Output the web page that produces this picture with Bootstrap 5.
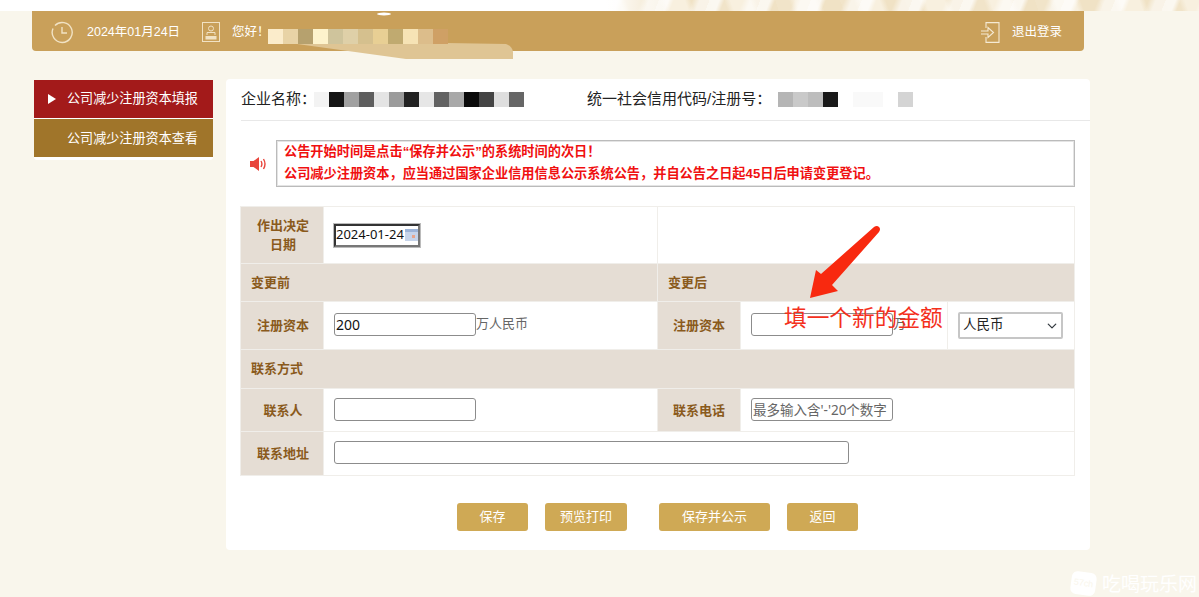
<!DOCTYPE html>
<html lang="zh-CN">

<head>
    <meta charset="UTF-8">
    <meta name="viewport" content="width=device-width, initial-scale=1.0">
    <title>公司减少注册资本填报</title>
    <link href="https://cdn.jsdelivr.net/npm/bootstrap@5.3.0/dist/css/bootstrap.min.css" rel="stylesheet">
    <style>
        body {
            background: #f9f6ec;
            font-family: "Liberation Sans", "Noto Sans CJK SC", sans-serif;
            font-size: 13px;
            color: #222;
            height: 597px;
            overflow: hidden;
            position: relative;
        }

        .top-strip {
            height: 11px;
            background:
                linear-gradient(90deg, #fff 0, #fff 605px, rgba(255, 255, 255, 0) 670px, rgba(255, 255, 255, 0) 100%),
                repeating-linear-gradient(112deg, rgba(255, 255, 255, .75) 0 9px, rgba(255, 255, 255, 0) 14px 31px, rgba(255, 255, 255, .6) 38px 47px),
                repeating-linear-gradient(70deg, #f1e4c9 0 13px, #f8f0df 19px 37px, #f0e2c5 43px 61px);
        }

        .head-bar {
            margin-left: 32px;
            width: 1052px;
            height: 40px;
            padding-top: 2px;
            background: #c9a05a;
            border-radius: 0 0 4px 4px;
            color: #fff;
            position: relative;
        }

        .head-clock {
            margin-left: 18px;
        }

        .head-date {
            width: 92px;
            margin-left: 13px;
            white-space: nowrap;
            font-size: 12.5px;
        }

        .head-card {
            margin-left: 23px;
        }

        .head-hello {
            margin-left: 12px;
            font-size: 12.5px;
        }

        .head-right {
            padding-right: 22px;
        }

        .head-logout {
            margin-left: 12px;
            font-size: 12.5px;
        }

        .head-cover {
            position: absolute;
            left: 224px;
            top: 0;
            overflow: visible;
        }

        .body-wrap {
            margin-top: 28px;
            padding-left: 34px;
        }

        .side-menu {
            width: 179px;
            height: 80px;
            margin-top: 1px;
            background: #fff;
            border-radius: 0 0 3px 3px;
        }

        .side-item {
            height: 38px;
            margin-bottom: 1px;
            padding-left: 33px;
            color: #fff;
            font-size: 13.1px;
            line-height: 38px;
            position: relative;
        }

        .side-on {
            background: #a31a1a;
        }

        .side-off {
            background: #a0752a;
            line-height: 39px;
        }

        .side-on::before {
            content: "";
            position: absolute;
            left: 14px;
            top: 14px;
            border-left: 8px solid #fff;
            border-top: 5px solid transparent;
            border-bottom: 5px solid transparent;
        }

        .main-panel {
            width: 864px;
            height: 471px;
            margin-left: 13px;
            background: #fff;
            border-radius: 4px;
            position: relative;
        }

        .firm-row {
            height: 42px;
            margin-left: 15px;
            border-bottom: 1px solid #e8e8e8;
            font-size: 15px;
            white-space: nowrap;
        }

        .firm-label-a {
            width: 73px;
        }

        .firm-label-b {
            width: 191px;
            margin-left: 63px;
        }

        .notice-row {
            margin: 19px 15px 19px 24px;
        }

        .notice-box {
            width: 799px;
            height: 47px;
            margin-left: 9px;
            padding: 0 7px;
            border: 1px solid #bbb;
            box-shadow: inset 0 0 0 1px #e4e4e4;
            color: #f01010;
            font-weight: 700;
            font-size: 13.2px;
            line-height: 22px;
            white-space: nowrap;
        }

        .form-grid {
            width: 834px;
            margin-left: 14px;
            table-layout: fixed;
            border-collapse: collapse;
        }

        .col-label {
            width: 83px;
        }

        .col-left {
            width: 334px;
        }

        .col-money {
            width: 207px;
        }

        .col-kind {
            width: 127px;
        }

        .row-date {
            height: 57px;
        }

        .row-band {
            height: 38px;
        }

        .row-band-tall {
            height: 39px;
        }

        .row-money {
            height: 48px;
        }

        .row-contact {
            height: 43px;
        }

        .row-address {
            height: 44px;
        }

        .form-grid td {
            border: 1px solid #f0eeea;
            padding: 0 0 0 10px;
            vertical-align: middle;
        }

        .form-grid td.cell-label {
            padding: 0 10px;
            background: #e5ddd4;
            color: #8a5a1c;
            font-weight: 700;
            text-align: center;
            line-height: 19px;
        }

        .form-grid td.cell-label:first-child {
            padding: 0 9px 0 11px;
        }

        .form-grid td.cell-section {
            background: #e5ddd4;
            color: #8a5a1c;
            font-weight: 700;
        }

        .line-input {
            width: 142px;
            height: 23px;
            margin-bottom: 2px;
            padding: 0 1px;
            border: 1px solid #8c8c8c;
            border-radius: 3px;
            font-family: "Noto Sans", "Noto Sans CJK SC", sans-serif;
            font-size: 14px;
            color: #111;
            vertical-align: middle;
            outline: 0;
        }

        .line-input::placeholder {
            color: #666;
            font-size: 13.5px;
        }

        .line-wide {
            width: 515px;
        }

        .input-unit {
            color: #666;
            vertical-align: 1px;
        }

        .date-box {
            width: 86px;
            height: 23px;
            border: 2px solid #333;
            border-bottom-color: #777;
            border-right-color: #777;
            outline: 1px solid #bbb;
        }

        .date-box input {
            width: 69px;
            height: 19px;
            padding: 0;
            border: 0;
            font-family: "Noto Sans", sans-serif;
            font-size: 13px;
            color: #111;
            outline: 0;
        }

        .money-select.form-select {
            width: 105px;
            height: 27px;
            padding: 0 0 0 3px;
            border: 2px solid #c6c6c6;
            border-radius: 2px;
            background-position: right 3px center;
            background-size: 12px 10px;
            font-size: 13.5px;
            color: #222;
        }

        .btn-row {
            margin-top: 27px;
            margin-left: 231px;
            gap: 17px;
        }

        .btn-gold.btn {
            height: 28px;
            padding: 0;
            border: 0;
            border-radius: 3px;
            background: #cfa955;
            color: #fff;
            font-size: 13px;
            line-height: 28px;
        }

        .btn-short {
            width: 71px;
        }

        .btn-print {
            width: 82px;
            margin-right: 15px;
        }

        .btn-publish {
            width: 111px;
        }

        .note-arrow {
            position: absolute;
            left: 582px;
            top: 146px;
        }

        .note-text {
            position: absolute;
            left: 558px;
            top: 224px;
            color: #f4301c;
            font-size: 22.7px;
            line-height: 30px;
            white-space: nowrap;
        }

        .mark-logo {
            position: absolute;
            left: 1071px;
            top: 572px;
            width: 25px;
            height: 23px;
            background: #fff;
            border-radius: 6px;
            transform: rotate(8deg);
            color: #f9f6ec;
            font-size: 9px;
            line-height: 23px;
            text-align: center;
        }

        .mark-text {
            position: absolute;
            left: 1102px;
            top: 573px;
            color: #fff;
            font-size: 19px;
            line-height: 24px;
            white-space: nowrap;
        }
    </style>
</head>

<body>
    <div class="top-strip"></div>

    <div class="head-bar d-flex align-items-center">
        <svg class="head-clock" width="24" height="24" viewBox="0 0 24 24" fill="none" stroke="#f1e2c4" stroke-width="1.4">
            <path d="M5 5.500a10 10 0 1 1-2 3"/>
            <path d="M12 7v6h5"/>
        </svg>
        <span class="head-date">2024年01月24日</span>
        <svg class="head-card" width="18" height="20" viewBox="0 0 18 20" fill="none" stroke="#f1e2c4" stroke-width="1">
            <rect x=".5" y=".5" width="17" height="19"/>
            <circle cx="9" cy="6.500" r="2.500"/>
            <path d="M5 13v-2.500h8V13"/>
            <rect x="4" y="14.500" width="10" height="2.500" fill="#f1e2c4"/>
        </svg>
        <span class="head-hello">您好！</span>
        <svg class="head-cover" width="300" height="50" viewBox="0 0 300 50">
            <ellipse cx="128" cy="3" rx="7" ry="1.500" fill="#fff"/>
            <path d="M12 29L250 33q6 2 7 8v7H150z" fill="#dfc594"/>
            <g>
                <rect x="12" y="18" width="15" height="15" fill="#fbeccb"/>
                <rect x="27" y="18" width="15" height="15" fill="#e8d3a6"/>
                <rect x="42" y="18" width="15" height="15" fill="#b6a16e"/>
                <rect x="57" y="18" width="15" height="15" fill="#fdf3cc"/>
                <rect x="72" y="18" width="15" height="15" fill="#cfc49c"/>
                <rect x="87" y="18" width="15" height="15" fill="#dfd0a8"/>
                <rect x="102" y="18" width="15" height="15" fill="#d5c08e"/>
                <rect x="117" y="18" width="15" height="15" fill="#e8cf94"/>
                <rect x="132" y="18" width="15" height="15" fill="#c0aa70"/>
                <rect x="147" y="18" width="15" height="15" fill="#f6e3b5"/>
                <rect x="162" y="18" width="15" height="15" fill="#dcbd8b"/>
                <rect x="177" y="18" width="15" height="15" fill="#cfa065"/>
            </g>
        </svg>
        <div class="head-right ms-auto d-flex align-items-center">
            <svg width="19" height="21" viewBox="0 0 19 21" fill="none" stroke="#f5ead4" stroke-width="1.100">
                <path d="M5 6V.6h13v19.800H5V15"/>
                <path d="M0 9h7V5.500l5.500 5-5.500 5V12H0"/>
            </svg>
            <span class="head-logout">退出登录</span>
        </div>
    </div>

    <div class="body-wrap d-flex align-items-start">
        <div class="side-menu">
            <div class="side-item side-on">公司减少注册资本填报</div>
            <div class="side-item side-off">公司减少注册资本查看</div>
        </div>

        <div class="main-panel">
            <div class="firm-row d-flex align-items-center">
                <span class="firm-label-a">企业名称：</span>
                <svg width="210" height="15" viewBox="0 0 210 15">
                    <rect width="15" height="15" fill="#f3f3f3"/>
                    <rect x="15" width="15" height="15" fill="#151515"/>
                    <rect x="30" width="15" height="15" fill="#a0a0a0"/>
                    <rect x="45" width="15" height="15" fill="#5e5e5e"/>
                    <rect x="60" width="15" height="15" fill="#e4e4e4"/>
                    <rect x="75" width="15" height="15" fill="#9b9b9b"/>
                    <rect x="90" width="15" height="15" fill="#222"/>
                    <rect x="105" width="15" height="15" fill="#e6e6e6"/>
                    <rect x="120" width="15" height="15" fill="#626262"/>
                    <rect x="135" width="15" height="15" fill="#a8a8a8"/>
                    <rect x="150" width="15" height="15" fill="#0a0a0a"/>
                    <rect x="165" width="15" height="15" fill="#444"/>
                    <rect x="180" width="15" height="15" fill="#dedede"/>
                    <rect x="195" width="15" height="15" fill="#666"/>
                </svg>
                <span class="firm-label-b">统一社会信用代码/注册号：</span>
                <svg width="135" height="15" viewBox="0 0 135 15">
                    <rect width="15" height="15" fill="#b5b5b5"/>
                    <rect x="15" width="15" height="15" fill="#c9c9c9"/>
                    <rect x="30" width="15" height="15" fill="#bdbdbd"/>
                    <rect x="45" width="15" height="15" fill="#191919"/>
                    <rect x="75" width="30" height="15" fill="#f9f9f9"/>
                    <rect x="120" width="15" height="15" fill="#d4d4d4"/>
                </svg>
            </div>

            <div class="notice-row d-flex align-items-center">
                <svg width="17" height="16" viewBox="0 0 17 16">
                    <path d="M0 5h3.500L9 1v14L3.500 11H0z" fill="#e8453c"/>
                    <path d="M11 5q1.800 3 0 6M13.500 3q3 5 0 10" fill="none" stroke="#e8453c" stroke-width="1.400"/>
                </svg>
                <div class="notice-box">
                    <div>公告开始时间是点击“保存并公示”的系统时间的次日！</div>
                    <div>公司减少注册资本，应当通过国家企业信用信息公示系统公告，并自公告之日起45日后申请变更登记。</div>
                </div>
            </div>

            <table class="form-grid">
                <colgroup>
                    <col class="col-label">
                    <col class="col-left">
                    <col class="col-label">
                    <col class="col-money">
                    <col class="col-kind">
                </colgroup>
                <tr class="row-date">
                    <td class="cell-label">作出决定日期</td>
                    <td>
                        <div class="date-box d-flex align-items-center">
                            <input type="text" value="2024-01-24">
                            <svg width="13" height="12" viewBox="0 0 13 12">
                                <rect width="13" height="12" fill="#c6d4ea"/>
                                <rect y="0" width="13" height="3" fill="#9db4d8"/>
                                <rect x="7" y="6" width="3" height="3" fill="#e8a58c"/>
                            </svg>
                        </div>
                    </td>
                    <td colspan="3"></td>
                </tr>
                <tr class="row-band">
                    <td class="cell-section" colspan="2">变更前</td>
                    <td class="cell-section" colspan="3">变更后</td>
                </tr>
                <tr class="row-money">
                    <td class="cell-label">注册资本</td>
                    <td><input class="line-input" type="text" value="200"><span class="input-unit">万人民币</span></td>
                    <td class="cell-label">注册资本</td>
                    <td><input class="line-input" type="text"><span class="input-unit">万</span></td>
                    <td>
                        <select class="form-select money-select">
                            <option>人民币</option>
                        </select>
                    </td>
                </tr>
                <tr class="row-band-tall">
                    <td class="cell-section" colspan="5">联系方式</td>
                </tr>
                <tr class="row-contact">
                    <td class="cell-label">联系人</td>
                    <td><input class="line-input" type="text"></td>
                    <td class="cell-label">联系电话</td>
                    <td colspan="2"><input class="line-input" type="text" placeholder="最多输入含'-'20个数字"></td>
                </tr>
                <tr class="row-address">
                    <td class="cell-label">联系地址</td>
                    <td colspan="4"><input class="line-input line-wide" type="text"></td>
                </tr>
            </table>

            <div class="btn-row d-flex">
                <button class="btn btn-gold btn-short" type="button">保存</button>
                <button class="btn btn-gold btn-print" type="button">预览打印</button>
                <button class="btn btn-gold btn-publish" type="button">保存并公示</button>
                <button class="btn btn-gold btn-short" type="button">返回</button>
            </div>

            <svg class="note-arrow" width="72" height="74" viewBox="0 0 72 74">
                <path d="M2 73L8 45l5 4 53-47q3-2 5 0t0 5L24 60l6 6z" fill="#f8290f"/>
            </svg>
            <div class="note-text">填一个新的金额</div>
        </div>
    </div>

    <div class="mark-logo">57ch</div>
    <div class="mark-text">吃喝玩乐网</div>

    <script src="https://cdn.jsdelivr.net/npm/bootstrap@5.3.0/dist/js/bootstrap.bundle.min.js"></script>
</body>

</html>
